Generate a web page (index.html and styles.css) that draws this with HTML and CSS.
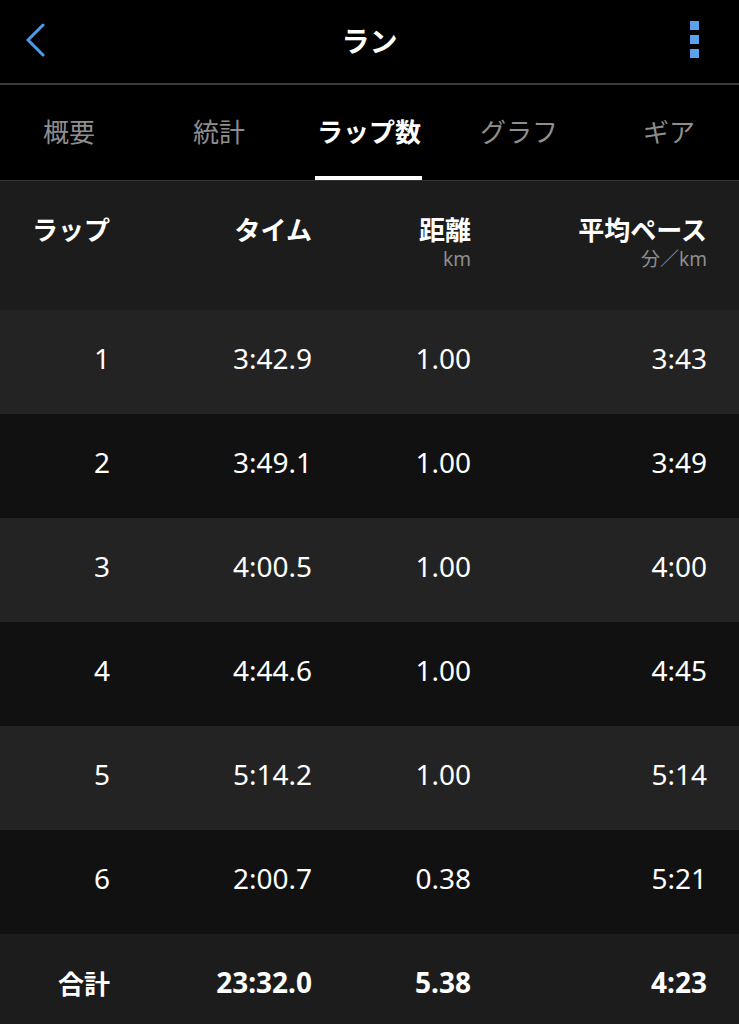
FILE: index.html
```html
<!DOCTYPE html>
<html lang="ja">
<head>
<meta charset="utf-8">
<link rel="stylesheet" href="styles.css">
</head>
<body>
<div class="app">
  <header class="nav">
    <button class="nav-back" aria-label="戻る">
      <svg width="22" height="34" viewBox="0 0 22 34"><polyline points="18,2 3,17 18,32" fill="none" stroke="#4a9ce9" stroke-width="3" stroke-linecap="round" stroke-linejoin="round"/></svg>
    </button>
    <h1 class="nav-title">ラン</h1>
    <button class="nav-more" aria-label="メニュー">
      <span class="dot"></span><span class="dot"></span><span class="dot"></span>
    </button>
  </header>
  <div class="tabs-wrap">
    <nav class="tabs">
      <div class="tab">概要</div>
      <div class="tab">統計</div>
      <div class="tab active">ラップ数</div>
      <div class="tab">グラフ</div>
      <div class="tab">ギア</div>
    </nav>
  </div>
  <section class="table">
    <div class="row head">
      <div class="cell"><span class="label">ラップ</span></div>
      <div class="cell"><span class="label">タイム</span></div>
      <div class="cell"><span class="label">距離</span><span class="unit">km</span></div>
      <div class="cell"><span class="label">平均ペース</span><span class="unit">分／km</span></div>
    </div>
    <div class="row light"><div class="cell">1</div><div class="cell">3:42.9</div><div class="cell">1.00</div><div class="cell">3:43</div></div>
    <div class="row dark"><div class="cell">2</div><div class="cell">3:49.1</div><div class="cell">1.00</div><div class="cell">3:49</div></div>
    <div class="row light"><div class="cell">3</div><div class="cell">4:00.5</div><div class="cell">1.00</div><div class="cell">4:00</div></div>
    <div class="row dark"><div class="cell">4</div><div class="cell">4:44.6</div><div class="cell">1.00</div><div class="cell">4:45</div></div>
    <div class="row light"><div class="cell">5</div><div class="cell">5:14.2</div><div class="cell">1.00</div><div class="cell">5:14</div></div>
    <div class="row dark"><div class="cell">6</div><div class="cell">2:00.7</div><div class="cell">0.38</div><div class="cell">5:21</div></div>
    <div class="row total"><div class="cell">合計</div><div class="cell">23:32.0</div><div class="cell">5.38</div><div class="cell">4:23</div></div>
  </section>
</div>
</body>
</html>
```
FILE: styles.css
```css
html, body {
  margin: 0;
  padding: 0;
  background: #000;
}
.app {
  width: 739px;
  height: 1024px;
  overflow: hidden;
  background: #000;
  color: #fff;
  font-family: "Noto Sans", "Noto Sans CJK JP", sans-serif;
}
.nav {
  height: 83px;
  border-bottom: 2px solid #3a3a3a;
  display: flex;
  align-items: center;
  justify-content: space-between;
  padding: 0 40px 0 25px;
  box-sizing: content-box;
  position: relative;
}
.nav button {
  background: none;
  border: 0;
  padding: 0;
  margin: 0;
  display: flex;
}
.nav-back {
  margin-top: -4px !important;
}
.nav-title {
  position: absolute;
  left: 0;
  right: 0;
  top: 0;
  height: 83px;
  margin: 0;
  display: flex;
  align-items: center;
  justify-content: center;
  font-family: "Noto Sans CJK JP", sans-serif;
  font-size: 28px;
  font-weight: 700;
  padding-bottom: 3px;
  box-sizing: border-box;
  pointer-events: none;
}
.nav-more {
  flex-direction: column;
  gap: 5px;
  margin-top: -4px !important;
  position: relative;
  z-index: 1;
}
.dot {
  width: 9px;
  height: 9px;
  background: #5aa2ec;
  display: block;
}
.tabs-wrap {
  height: 95px;
  border-bottom: 1px solid #333;
  overflow: hidden;
}
.tabs {
  display: grid;
  grid-template-columns: repeat(5, 150px);
  height: 95px;
  margin-left: -6px;
}
.tab {
  display: flex;
  align-items: center;
  justify-content: center;
  font-family: "Noto Sans CJK JP", sans-serif;
  font-size: 26px;
  color: #8e8e8e;
  padding-bottom: 4px;
  position: relative;
}
.tab.active {
  color: #fff;
  font-weight: 700;
}
.tab.active::after {
  content: "";
  position: absolute;
  bottom: 0;
  left: 50%;
  width: 107px;
  margin-left: -54px;
  height: 4px;
  background: #fff;
}
.table {
  display: flex;
  flex-direction: column;
}
.row {
  display: grid;
  grid-template-columns: 110px 202px 159px 236px;
  padding-right: 32px;
  height: 104px;
  align-items: center;
  font-size: 28px;
  padding-bottom: 8px;
  box-sizing: border-box;
}
.cell {
  text-align: right;
  display: flex;
  flex-direction: column;
  align-items: flex-end;
}
.row.head {
  height: 129px;
  background: #1c1c1c;
  align-items: start;
  padding-top: 33px;
  padding-bottom: 0;
}
.label {
  font-family: "Noto Sans CJK JP", sans-serif;
  font-size: 26px;
  font-weight: 700;
  line-height: 30px;
}
.unit {
  font-size: 19px;
  line-height: 22px;
  color: #8e8e8e;
  margin-top: 4px;
  font-family: "Noto Sans", "Noto Sans CJK JP", sans-serif;
}
.row.light {
  background: #232323;
}
.row.dark {
  background: #111;
}
.row.total {
  background: #1c1c1c;
  height: 90px;
  font-weight: 700;
  padding-top: 6px;
  padding-bottom: 0;
}
.row.total .cell:first-child {
  font-family: "Noto Sans CJK JP", sans-serif;
  font-size: 26px;
}
```
